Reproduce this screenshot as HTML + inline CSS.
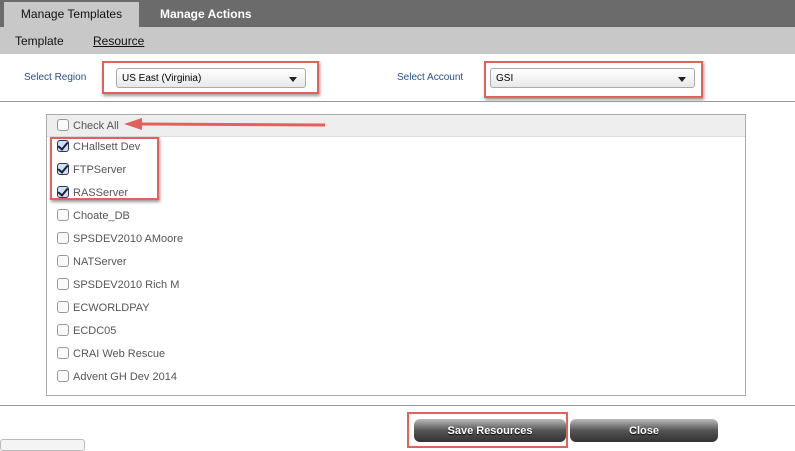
<!DOCTYPE html><html><head><style>
body{margin:0;width:795px;height:446px;overflow:hidden;background:#fff;font-family:"Liberation Sans",sans-serif;position:relative}
.a{position:absolute}
.item{position:absolute;left:57px;font-size:11px;color:#555;height:14px;line-height:14px}
.cb{display:inline-block;width:10px;height:10px;border:1px solid #999;border-radius:3px;background:#fafafa;vertical-align:-2px;margin-right:4px;position:relative}
.ck::after{content:"";position:absolute;left:2px;top:-1px;width:4px;height:8px;border:solid #123;border-width:0 2px 2px 0;transform:rotate(40deg)}
.ck{background:#cfe0f5;border-color:#335}
.sel{position:absolute;height:20px;border:1px solid #aaa;border-radius:3px;background:linear-gradient(#fff,#e8e8e8);font-size:10px;line-height:20px;padding-left:5px;box-sizing:border-box}
.sel::after{content:"";position:absolute;right:8px;top:8px;border:4px solid transparent;border-top:5px solid #222}
.red{position:absolute;border:2px solid #e4605a;box-shadow:1px 2px 3px rgba(0,0,0,.4)}
.btn{position:absolute;top:419px;height:23px;border-radius:6px;background:linear-gradient(#bbb,#555 50%,#333);color:#fff;font-size:11px;font-weight:bold;text-align:center;line-height:24px;text-shadow:0 1px 1px #000}
</style></head><body>
<div class="a" style="left:0;top:0;width:795px;height:27px;background:#6b6b6b"></div>
<div class="a" style="left:4px;top:2px;width:135px;height:25px;background:#c8c8c8;font-size:12px;line-height:24px;text-align:center;color:#111">Manage Templates</div>
<div class="a" style="left:160px;top:2px;font-size:12px;font-weight:bold;color:#fff;line-height:24px">Manage Actions</div>
<div class="a" style="left:0;top:27px;width:795px;height:27px;background:#c8c8c8"></div>
<div class="a" style="left:15px;top:34px;font-size:12px;color:#111">Template</div>
<div class="a" style="left:93px;top:34px;font-size:12px;color:#111;text-decoration:underline">Resource</div>
<div class="a" style="left:24px;top:72px;font-size:10px;color:#2a4f86">Select Region</div>
<div class="a" style="left:397px;top:72px;font-size:10px;color:#2a4f86">Select Account</div>
<div class="sel" style="left:116px;top:68px;width:190px">US East (Virginia)</div>
<div class="sel" style="left:490px;top:68px;width:205px">GSI</div>
<div class="red" style="left:102px;top:61px;width:213px;height:29px"></div>
<div class="red" style="left:484px;top:61px;width:215px;height:33px"></div>
<div class="a" style="left:0;top:101px;width:795px;height:1px;background:#999"></div>
<div class="a" style="left:46px;top:114px;width:700px;height:282px;border:1px solid #aaa;box-sizing:border-box"></div>
<div class="a" style="left:47px;top:115px;width:698px;height:21px;background:#eee;border-bottom:1px solid #ddd"></div>
<div class="item" style="top:119px"><span class="cb"></span>Check All</div>
<svg class="a" style="left:120px;top:117px" width="210" height="14"><line x1="205" y1="8" x2="20" y2="7" stroke="#e4605a" stroke-width="3"/><polygon points="4,7 22,1 22,13" fill="#e4605a"/></svg>
<div class="item" style="top:140px"><span class="cb ck"></span>CHallsett Dev</div>
<div class="item" style="top:163px"><span class="cb ck"></span>FTPServer</div>
<div class="item" style="top:186px"><span class="cb ck"></span>RASServer</div>
<div class="red" style="left:50px;top:137px;width:105px;height:59px"></div>
<div class="item" style="top:209px"><span class="cb"></span>Choate_DB</div>
<div class="item" style="top:232px"><span class="cb"></span>SPSDEV2010 AMoore</div>
<div class="item" style="top:255px"><span class="cb"></span>NATServer</div>
<div class="item" style="top:278px"><span class="cb"></span>SPSDEV2010 Rich M</div>
<div class="item" style="top:301px"><span class="cb"></span>ECWORLDPAY</div>
<div class="item" style="top:324px"><span class="cb"></span>ECDC05</div>
<div class="item" style="top:347px"><span class="cb"></span>CRAI Web Rescue</div>
<div class="item" style="top:370px"><span class="cb"></span>Advent GH Dev 2014</div>
<div class="a" style="left:0;top:405px;width:795px;height:1px;background:#999"></div>
<div class="btn" style="left:414px;width:152px">Save Resources</div>
<div class="btn" style="left:570px;width:148px">Close</div>
<div class="red" style="left:407px;top:412px;width:157px;height:32px;box-shadow:none"></div>
<div class="a" style="left:0;top:439px;width:83px;height:10px;border:1px solid #bbb;border-radius:3px;background:#f4f4f4"></div>
</body></html>
